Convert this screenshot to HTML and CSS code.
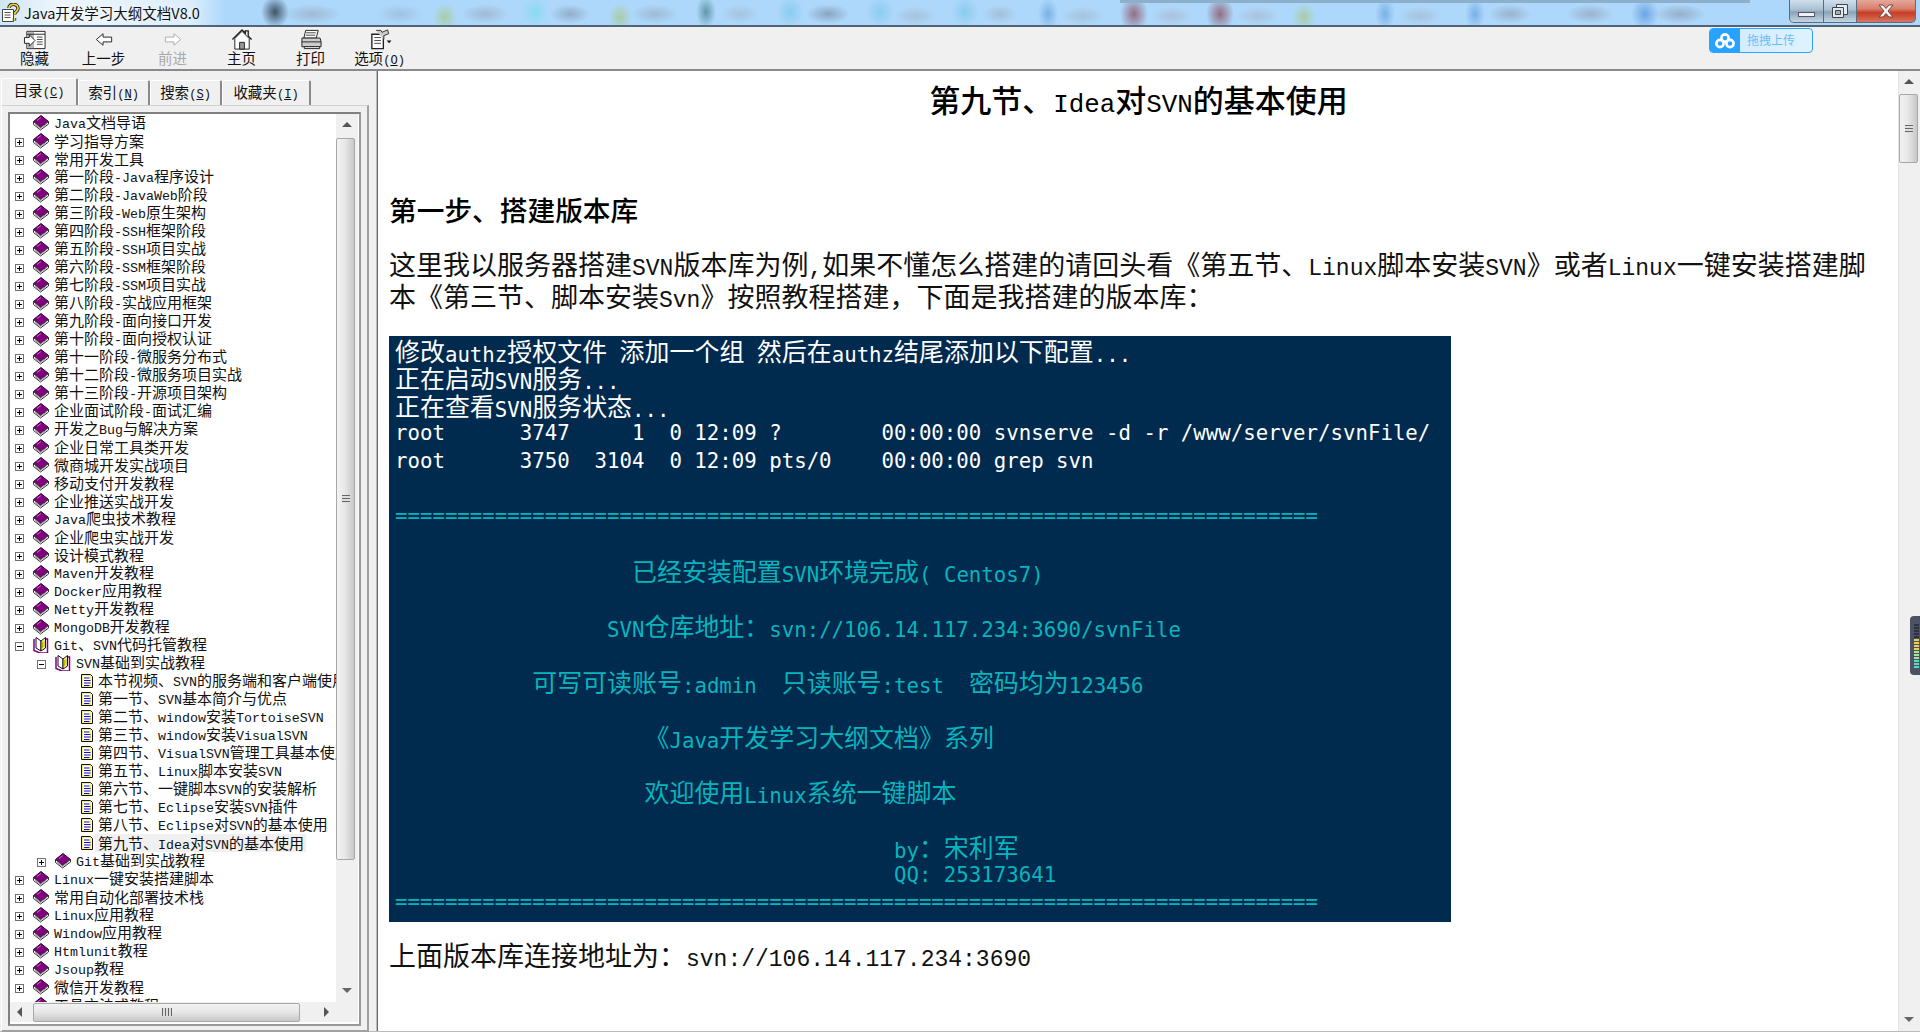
FILE: index.html
```html
<!DOCTYPE html>
<html lang="zh-CN">
<head>
<meta charset="utf-8">
<title>Java开发学习大纲文档V8.0</title>
<link rel="stylesheet" href="styles.css">
</head>
<body>
<svg class="defs" width="0" height="0" aria-hidden="true">
  <symbol id="book" viewBox="0 0 16 16">
    <path d="M.5 6.500 8 .5l7.500 6L7.500 12.500Z" fill="#800080" stroke="#300030"/>
    <path d="M.5 6.500v3l7 5.500 8-6v-2.500l-8 6Z" fill="#fff" stroke="#333"/>
    <path d="M4 5.500 8 2.500" stroke="#c070c0" fill="none"/>
    <path d="M2 9.500l5.500 4 6.500-5" stroke="#999" fill="none"/>
  </symbol>
  <symbol id="open" viewBox="0 0 16 16">
    <path d="M1 2v11.500l6 2.500h7.500V2h-2.500" fill="#fff" stroke="#800080" stroke-width="1.500"/>
    <path d="M3 .5 8 4v10L3 11Z" fill="#fff" stroke="#111"/>
    <path d="M8 4l4.500-3.500V11L8 14Z" fill="#f6f08a" stroke="#111"/>
    <path d="M9.500 5v6M11 4v6" stroke="#c8b400" fill="none"/>
  </symbol>
  <symbol id="page" viewBox="0 0 16 16">
    <path d="M4.500 1.500h9l2 2v11h-11Z" fill="#fff" stroke="#111"/>
    <path d="M5.500 2.500h8v11h-8Z" fill="none" stroke="#e8d800" stroke-dasharray="1 1"/>
    <path d="M7 5h5.500M7 7.500h6.500M7 10h6.500M7 12.500h5.500" stroke="#1010c0" stroke-width="1.200" fill="none"/>
  </symbol>
  <symbol id="plus" viewBox="0 0 9 9">
    <rect x=".5" y=".5" width="8" height="8" fill="#fff" stroke="#707070"/>
    <path d="M2 4.500h5M4.500 2v5" stroke="#000"/>
  </symbol>
  <symbol id="minus" viewBox="0 0 9 9">
    <rect x=".5" y=".5" width="8" height="8" fill="#fff" stroke="#707070"/>
    <path d="M2 4.500h5" stroke="#000"/>
  </symbol>
</svg>

<div class="app">
  <header class="titlebar">
    <svg class="appicon" viewBox="0 0 20 20"><path d="M1.500 6.500h11v12h-11Z" fill="#fff" stroke="#444"/><path d="M3.500 9.500h6M3.500 12h6M3.500 14.500h6" stroke="#555"/><path d="M8 5c0-5 9-5 9 .5 0 3-3.500 3-3.500 6M13.500 15v2.500" fill="none" stroke="#111" stroke-width="3.400"/><path d="M8 5c0-5 9-5 9 .5 0 3-3.500 3-3.500 6M13.500 15v2.500" fill="none" stroke="#ecd23a" stroke-width="1.800"/></svg>
    <span class="apptitle">Java开发学习大纲文档V8.0</span>
    <div class="winctl">
      <button class="wb wmin"><span class="minbar"></span></button>
      <button class="wb wres"><svg width="18" height="16" viewBox="0 0 18 16"><path d="M5.500 1.500h11v10h-11Z" fill="#e4edf4" stroke="#444"/><path d="M1.500 4.500h11v10h-11Z" fill="#dfe8ef" stroke="#444"/><path d="M4.500 7.500h5v4h-5Z" fill="#9db2c4" stroke="#444"/></svg></button>
      <button class="wb wclose"><svg width="18" height="14" viewBox="0 0 18 14"><path d="M2 1h4l3 3.500L12 1h4l-5 6 5 6h-4L9 9.500 6 13H2l5-6Z" fill="#f4f4f4" stroke="#6a4a48"/></svg></button>
    </div>
  </header>

  <nav class="toolbar">
    <div class="tool">
      <svg class="tico" viewBox="0 0 24 24"><path d="M3.500 3.500h19v18h-19Z" fill="#fff" stroke="#222"/><path d="M4 4h7v17H4Z" fill="#b8b8b8"/><path d="M3.500 6.500h19" stroke="#222"/><path d="M14 9.500h6M14 12h6M14 14.500h6M14 17h6" stroke="#444"/><path d="M1 10h5V7l6 6-6 6v-3H1Z" fill="#fff" stroke="#222"/></svg>
      <span>隐藏</span>
    </div>
    <div class="tool">
      <svg class="tico" viewBox="0 0 24 24"><path d="M4 12l7-6v3.500h9v5h-9V18Z" fill="#fff" stroke="#222"/></svg>
      <span>上一步</span>
    </div>
    <div class="tool off">
      <svg class="tico" viewBox="0 0 24 24"><path d="M20 12l-7-6v3.500H4v5h9V18Z" fill="#fff" stroke="#aaa"/></svg>
      <span>前进</span>
    </div>
    <div class="tool">
      <svg class="tico" viewBox="0 0 24 24"><path d="M2 12 12 2l3.500 3.500V3h3v5.500L22 12" fill="none" stroke="#222" stroke-width="1.400"/><path d="M4.500 11v11h15V11L12 3.500Z" fill="#fff" stroke="#222"/><path d="M9.500 22v-7h5v7Z" fill="#999" stroke="#222"/></svg>
      <span>主页</span>
    </div>
    <div class="tool">
      <svg class="tico" viewBox="0 0 24 24"><path d="M6.500 2.500h13l-2 8h-13Z" fill="#fff" stroke="#222"/><path d="M7 5h10M6.500 7.500h10" stroke="#444"/><path d="M2.500 10.500h19l1 4v5h-20v-5Z" fill="#ccc" stroke="#222"/><path d="M2.500 14.500h20" stroke="#222"/><path d="M5 19.500h16v2H5Z" fill="#fff" stroke="#222"/></svg>
      <span>打印</span>
    </div>
    <div class="tool">
      <svg class="tico" viewBox="0 0 24 24"><path d="M3.500 6.500h12v15h-12Z" fill="#fff" stroke="#222" stroke-width="1.400"/><path d="M6 10h7M6 13h7M6 16h7" stroke="#444"/><path d="M8 2.500h5l1 2 6-2.500 1 4-5 2v4" fill="#ccc" stroke="#333"/><path d="M19 13h5l-2.500 3Z" fill="#111"/></svg>
      <span>选项<span class="m">(<u>O</u>)</span></span>
    </div>
    <div class="upload">
      <span class="cloud"><svg width="22" height="18" viewBox="0 0 22 18"><g fill="none" stroke="#fff" stroke-width="2.600"><circle cx="11" cy="6" r="3.600"/><circle cx="6" cy="11.500" r="3.600"/><circle cx="16" cy="11.500" r="3.600"/></g></svg></span>
      <span class="uptext">拖拽上传</span>
    </div>
  </nav>

  <main class="main">
    <aside class="left">
      <div class="tabs">
        <div class="tab active">目录<span class="m">(<u>C</u>)</span></div>
        <div class="tab">索引<span class="m">(<u>N</u>)</span></div>
        <div class="tab">搜索<span class="m">(<u>S</u>)</span></div>
        <div class="tab wide">收藏夹<span class="m">(<u>I</u>)</span></div>
      </div>
      <div class="pane">
        <div class="treebox">
          <ul class="tree">
            <li class="row"><svg class="pm none"></svg><svg class="ic"><use href="#book"/></svg><span class="t"><span class="m">Java</span>文档导语</span></li>
            <li class="row"><svg class="pm"><use href="#plus"/></svg><svg class="ic"><use href="#book"/></svg><span class="t">学习指导方案</span></li>
            <li class="row"><svg class="pm"><use href="#plus"/></svg><svg class="ic"><use href="#book"/></svg><span class="t">常用开发工具</span></li>
            <li class="row"><svg class="pm"><use href="#plus"/></svg><svg class="ic"><use href="#book"/></svg><span class="t">第一阶段<span class="m">-Java</span>程序设计</span></li>
            <li class="row"><svg class="pm"><use href="#plus"/></svg><svg class="ic"><use href="#book"/></svg><span class="t">第二阶段<span class="m">-JavaWeb</span>阶段</span></li>
            <li class="row"><svg class="pm"><use href="#plus"/></svg><svg class="ic"><use href="#book"/></svg><span class="t">第三阶段<span class="m">-Web</span>原生架构</span></li>
            <li class="row"><svg class="pm"><use href="#plus"/></svg><svg class="ic"><use href="#book"/></svg><span class="t">第四阶段<span class="m">-SSH</span>框架阶段</span></li>
            <li class="row"><svg class="pm"><use href="#plus"/></svg><svg class="ic"><use href="#book"/></svg><span class="t">第五阶段<span class="m">-SSH</span>项目实战</span></li>
            <li class="row"><svg class="pm"><use href="#plus"/></svg><svg class="ic"><use href="#book"/></svg><span class="t">第六阶段<span class="m">-SSM</span>框架阶段</span></li>
            <li class="row"><svg class="pm"><use href="#plus"/></svg><svg class="ic"><use href="#book"/></svg><span class="t">第七阶段<span class="m">-SSM</span>项目实战</span></li>
            <li class="row"><svg class="pm"><use href="#plus"/></svg><svg class="ic"><use href="#book"/></svg><span class="t">第八阶段<span class="m">-</span>实战应用框架</span></li>
            <li class="row"><svg class="pm"><use href="#plus"/></svg><svg class="ic"><use href="#book"/></svg><span class="t">第九阶段<span class="m">-</span>面向接口开发</span></li>
            <li class="row"><svg class="pm"><use href="#plus"/></svg><svg class="ic"><use href="#book"/></svg><span class="t">第十阶段<span class="m">-</span>面向授权认证</span></li>
            <li class="row"><svg class="pm"><use href="#plus"/></svg><svg class="ic"><use href="#book"/></svg><span class="t">第十一阶段<span class="m">-</span>微服务分布式</span></li>
            <li class="row"><svg class="pm"><use href="#plus"/></svg><svg class="ic"><use href="#book"/></svg><span class="t">第十二阶段<span class="m">-</span>微服务项目实战</span></li>
            <li class="row"><svg class="pm"><use href="#plus"/></svg><svg class="ic"><use href="#book"/></svg><span class="t">第十三阶段<span class="m">-</span>开源项目架构</span></li>
            <li class="row"><svg class="pm"><use href="#plus"/></svg><svg class="ic"><use href="#book"/></svg><span class="t">企业面试阶段<span class="m">-</span>面试汇编</span></li>
            <li class="row"><svg class="pm"><use href="#plus"/></svg><svg class="ic"><use href="#book"/></svg><span class="t">开发之<span class="m">Bug</span>与解决方案</span></li>
            <li class="row"><svg class="pm"><use href="#plus"/></svg><svg class="ic"><use href="#book"/></svg><span class="t">企业日常工具类开发</span></li>
            <li class="row"><svg class="pm"><use href="#plus"/></svg><svg class="ic"><use href="#book"/></svg><span class="t">微商城开发实战项目</span></li>
            <li class="row"><svg class="pm"><use href="#plus"/></svg><svg class="ic"><use href="#book"/></svg><span class="t">移动支付开发教程</span></li>
            <li class="row"><svg class="pm"><use href="#plus"/></svg><svg class="ic"><use href="#book"/></svg><span class="t">企业推送实战开发</span></li>
            <li class="row"><svg class="pm"><use href="#plus"/></svg><svg class="ic"><use href="#book"/></svg><span class="t"><span class="m">Java</span>爬虫技术教程</span></li>
            <li class="row"><svg class="pm"><use href="#plus"/></svg><svg class="ic"><use href="#book"/></svg><span class="t">企业爬虫实战开发</span></li>
            <li class="row"><svg class="pm"><use href="#plus"/></svg><svg class="ic"><use href="#book"/></svg><span class="t">设计模式教程</span></li>
            <li class="row"><svg class="pm"><use href="#plus"/></svg><svg class="ic"><use href="#book"/></svg><span class="t"><span class="m">Maven</span>开发教程</span></li>
            <li class="row"><svg class="pm"><use href="#plus"/></svg><svg class="ic"><use href="#book"/></svg><span class="t"><span class="m">Docker</span>应用教程</span></li>
            <li class="row"><svg class="pm"><use href="#plus"/></svg><svg class="ic"><use href="#book"/></svg><span class="t"><span class="m">Netty</span>开发教程</span></li>
            <li class="row"><svg class="pm"><use href="#plus"/></svg><svg class="ic"><use href="#book"/></svg><span class="t"><span class="m">MongoDB</span>开发教程</span></li>
            <li class="row"><svg class="pm"><use href="#minus"/></svg><svg class="ic"><use href="#open"/></svg><span class="t"><span class="m">Git</span>、<span class="m">SVN</span>代码托管教程</span></li>
            <li class="row lv2"><svg class="pm"><use href="#minus"/></svg><svg class="ic"><use href="#open"/></svg><span class="t"><span class="m">SVN</span>基础到实战教程</span></li>
            <li class="row lv3"><svg class="pm none"></svg><svg class="ic"><use href="#page"/></svg><span class="t">本节视频、<span class="m">SVN</span>的服务端和客户端使用</span></li>
            <li class="row lv3"><svg class="pm none"></svg><svg class="ic"><use href="#page"/></svg><span class="t">第一节、<span class="m">SVN</span>基本简介与优点</span></li>
            <li class="row lv3"><svg class="pm none"></svg><svg class="ic"><use href="#page"/></svg><span class="t">第二节、<span class="m">window</span>安装<span class="m">TortoiseSVN</span></span></li>
            <li class="row lv3"><svg class="pm none"></svg><svg class="ic"><use href="#page"/></svg><span class="t">第三节、<span class="m">window</span>安装<span class="m">VisualSVN</span></span></li>
            <li class="row lv3"><svg class="pm none"></svg><svg class="ic"><use href="#page"/></svg><span class="t">第四节、<span class="m">VisualSVN</span>管理工具基本使用</span></li>
            <li class="row lv3"><svg class="pm none"></svg><svg class="ic"><use href="#page"/></svg><span class="t">第五节、<span class="m">Linux</span>脚本安装<span class="m">SVN</span></span></li>
            <li class="row lv3"><svg class="pm none"></svg><svg class="ic"><use href="#page"/></svg><span class="t">第六节、一键脚本<span class="m">SVN</span>的安装解析</span></li>
            <li class="row lv3"><svg class="pm none"></svg><svg class="ic"><use href="#page"/></svg><span class="t">第七节、<span class="m">Eclipse</span>安装<span class="m">SVN</span>插件</span></li>
            <li class="row lv3"><svg class="pm none"></svg><svg class="ic"><use href="#page"/></svg><span class="t">第八节、<span class="m">Eclipse</span>对<span class="m">SVN</span>的基本使用</span></li>
            <li class="row lv3"><svg class="pm none"></svg><svg class="ic"><use href="#page"/></svg><span class="t sel">第九节、<span class="m">Idea</span>对<span class="m">SVN</span>的基本使用</span></li>
            <li class="row lv2"><svg class="pm"><use href="#plus"/></svg><svg class="ic"><use href="#book"/></svg><span class="t"><span class="m">Git</span>基础到实战教程</span></li>
            <li class="row"><svg class="pm"><use href="#plus"/></svg><svg class="ic"><use href="#book"/></svg><span class="t"><span class="m">Linux</span>一键安装搭建脚本</span></li>
            <li class="row"><svg class="pm"><use href="#plus"/></svg><svg class="ic"><use href="#book"/></svg><span class="t">常用自动化部署技术栈</span></li>
            <li class="row"><svg class="pm"><use href="#plus"/></svg><svg class="ic"><use href="#book"/></svg><span class="t"><span class="m">Linux</span>应用教程</span></li>
            <li class="row"><svg class="pm"><use href="#plus"/></svg><svg class="ic"><use href="#book"/></svg><span class="t"><span class="m">Window</span>应用教程</span></li>
            <li class="row"><svg class="pm"><use href="#plus"/></svg><svg class="ic"><use href="#book"/></svg><span class="t"><span class="m">Htmlunit</span>教程</span></li>
            <li class="row"><svg class="pm"><use href="#plus"/></svg><svg class="ic"><use href="#book"/></svg><span class="t"><span class="m">Jsoup</span>教程</span></li>
            <li class="row"><svg class="pm"><use href="#plus"/></svg><svg class="ic"><use href="#book"/></svg><span class="t">微信开发教程</span></li>
            <li class="row"><svg class="pm"><use href="#plus"/></svg><svg class="ic"><use href="#book"/></svg><span class="t">工具方法或教程</span></li>
          </ul>
          <div class="vbar small">
            <span class="arrow up"></span>
            <span class="thumb-v"><span class="grip-v"></span></span>
            <span class="arrow down"></span>
          </div>
          <div class="hbar">
            <span class="arrow lf"></span>
            <span class="thumb-h"><span class="grip-h"></span></span>
            <span class="arrow rt"></span>
          </div>
          <div class="corner"></div>
        </div>
      </div>
    </aside>

    <section class="doc">
      <article class="page">
        <h1 class="h1">第九节、<span class="m">Idea</span>对<span class="m">SVN</span>的基本使用</h1>
        <h2 class="h2">第一步、搭建版本库</h2>
        <p class="para">这里我以服务器搭建<span class="m">SVN</span>版本库为例<span class="m">,</span>如果不懂怎么搭建的请回头看《第五节、<span class="m">Linux</span>脚本安装<span class="m">SVN</span>》或者<span class="m">Linux</span>一键安装搭建脚<br>本《第三节、脚本安装<span class="m">Svn</span>》按照教程搭建，下面是我搭建的版本库：</p>
        <div class="console">
          <div class="ln"><span class="cn">修改</span>authz<span class="cn">授权文件</span> <span class="cn">添加一个组</span> <span class="cn">然后在</span>authz<span class="cn">结尾添加以下配置</span>...</div>
          <div class="ln"><span class="cn">正在启动</span>SVN<span class="cn">服务</span>...</div>
          <div class="ln"><span class="cn">正在查看</span>SVN<span class="cn">服务状态</span>...</div>
          <div class="ln">root      3747     1  0 12:09 ?        00:00:00 svnserve -d -r /www/server/svnFile/</div>
          <div class="ln">root      3750  3104  0 12:09 pts/0    00:00:00 grep svn</div>
          <div class="ln"> </div>
          <div class="ln teal">==========================================================================</div>
          <div class="ln"> </div>
          <div class="ln teal">                   <span class="cn">已经安装配置</span>SVN<span class="cn">环境完成</span>( Centos7)</div>
          <div class="ln"> </div>
          <div class="ln teal">                 SVN<span class="cn">仓库地址</span><span class="cn tc">：</span>svn://106.14.117.234:3690/svnFile</div>
          <div class="ln"> </div>
          <div class="ln teal">           <span class="cn">可写可读账号</span>:admin  <span class="cn">只读账号</span>:test  <span class="cn">密码均为</span>123456</div>
          <div class="ln"> </div>
          <div class="ln teal">                    <span class="cn">《</span>Java<span class="cn">开发学习大纲文档》系列</span></div>
          <div class="ln"> </div>
          <div class="ln teal">                    <span class="cn">欢迎使用</span>Linux<span class="cn">系统一键脚本</span></div>
          <div class="ln"> </div>
          <div class="ln teal">                                        by<span class="cn tc">：</span><span class="cn">宋利军</span></div>
          <div class="ln teal">                                        QQ: 253173641</div>
          <div class="ln teal">==========================================================================</div>
        </div>
        <p class="para after">上面版本库连接地址为：<span class="m">svn://106.14.117.234:3690</span></p>
      </article>
      <div class="vbar big">
        <span class="arrow up"></span>
        <span class="thumb-v short"><span class="grip-v"></span></span>
        <span class="track"></span>
        <span class="arrow down"></span>
      </div>
      <div class="speed"><span class="ticks"></span></div>
    </section>
  </main>
</div>
</body>
</html>
```

FILE: styles.css
```css
* { box-sizing: border-box; }
html, body { margin: 0; padding: 0; height: 100%; overflow: hidden; }
body {
  font-family: "Noto Sans CJK SC", "Liberation Sans", sans-serif;
  background: #f0f0f0;
  color: #000;
}
.defs { display: block; height: 0; }
.app { display: flex; flex-direction: column; height: 1032px; width: 1920px; border-bottom: 1px solid #bbb; }
.m { font-family: "Liberation Mono", monospace; font-size: .8333em; line-height: 1; }

/* title bar */
.titlebar {
  height: 27px; flex: none; display: flex; align-items: center; position: relative;
  border-bottom: 2px solid #4f6477;
  background:
    linear-gradient(#8cafcb, #8cafcb) 1120px 0 / 630px 3px no-repeat,
    radial-gradient(ellipse 14px 16px at 275px 12px, #3f5368, transparent),
    radial-gradient(ellipse 30px 10px at 312px 14px, #9fbad4, transparent),
    radial-gradient(ellipse 24px 10px at 400px 14px, #9fc2e0, transparent),
    radial-gradient(ellipse 12px 14px at 445px 17px, #a8cca6, transparent),
    radial-gradient(ellipse 24px 10px at 485px 14px, #9fbad4, transparent),
    radial-gradient(ellipse 14px 16px at 535px 12px, #8adaf2, transparent),
    radial-gradient(ellipse 20px 10px at 570px 14px, #92aeca, transparent),
    radial-gradient(ellipse 12px 14px at 620px 17px, #a8cca6, transparent),
    radial-gradient(ellipse 24px 10px at 655px 14px, #9fbad4, transparent),
    radial-gradient(ellipse 10px 16px at 706px 12px, #6098aa, transparent),
    radial-gradient(ellipse 20px 10px at 740px 14px, #a4c4de, transparent),
    radial-gradient(ellipse 14px 16px at 790px 12px, #8accf0, transparent),
    radial-gradient(ellipse 22px 10px at 828px 14px, #8aa4c0, transparent),
    radial-gradient(ellipse 14px 16px at 880px 12px, #8accf0, transparent),
    radial-gradient(ellipse 22px 10px at 915px 16px, #a6c2dc, transparent),
    radial-gradient(ellipse 14px 16px at 965px 12px, #8accf0, transparent),
    radial-gradient(ellipse 18px 10px at 1000px 14px, #a4c0da, transparent),
    radial-gradient(ellipse 10px 16px at 1048px 14px, #7ab0e6, transparent),
    radial-gradient(ellipse 22px 10px at 1083px 16px, #a6c2dc, transparent),
    radial-gradient(ellipse 14px 18px at 1134px 14px, #926e82, transparent),
    radial-gradient(ellipse 22px 10px at 1172px 16px, #a8c2dc, transparent),
    radial-gradient(ellipse 14px 18px at 1220px 14px, #926e82, transparent),
    radial-gradient(ellipse 22px 10px at 1258px 16px, #a8c2dc, transparent),
    radial-gradient(ellipse 12px 14px at 1304px 17px, #a8cca6, transparent),
    radial-gradient(ellipse 10px 16px at 1385px 14px, #7ab0e6, transparent),
    radial-gradient(ellipse 22px 10px at 1420px 16px, #a6c2dc, transparent),
    radial-gradient(ellipse 10px 16px at 1475px 14px, #7ab0e6, transparent),
    radial-gradient(ellipse 22px 10px at 1510px 14px, #9ab2ce, transparent),
    radial-gradient(ellipse 24px 10px at 1590px 14px, #9ab2ce, transparent),
    radial-gradient(ellipse 14px 16px at 1645px 14px, #6ea4e2, transparent),
    radial-gradient(ellipse 26px 10px at 1680px 14px, #94aecb, transparent),
    linear-gradient(90deg, #d0e6f6 0, #eef6fc 60px, #dceefb 190px, #aed8fb 225px, #aed8fb 100%);
}
.appicon { width: 20px; height: 20px; margin-left: 1px; flex: none; }
.apptitle { margin-left: 3px; font-size: 14.5px; line-height: 24px; color: #111; text-shadow: 0 0 6px #fff; }
.winctl { margin-left: auto; margin-right: 4px; align-self: flex-start; display: flex; height: 23px; }
.wb {
  border: 1px solid #5c6b7a; border-top: 0; border-left-width: 1px; padding: 0; display: flex;
  align-items: center; justify-content: center;
}
.wmin { width: 35px; border-radius: 0 0 0 5px;
  background: linear-gradient(#cfe0ee 0, #a8bfd2 45%, #8ba2b7 55%, #c5d6e4 100%); }
.wres { width: 33px; border-left: 0;
  background: linear-gradient(#cfe0ee 0, #a8bfd2 45%, #8ba2b7 55%, #c5d6e4 100%); }
.wclose { width: 59px; border-left: 0; border-radius: 0 0 5px 0;
  background: linear-gradient(#e5a89c 0, #d87e6c 40%, #c63c24 58%, #d97460 100%); }
.minbar { display: block; width: 17px; height: 5px; margin-top: 7px; background: #eef2f6; border: 1px solid #556; }

/* toolbar */
.toolbar {
  height: 44px; flex: none; display: flex; background: #f0f0f0; border-bottom: 2px solid #8a8a8a; padding-top: 1px;
}
.tool { width: 69px; display: flex; flex-direction: column; align-items: center; font-size: 14.500px; line-height: 18px; color: #111; }
.tool .tico { width: 24px; height: 23px; flex: none; }
.tool > span { white-space: nowrap; margin-top: -2px; }
.tool.off { color: #a8a8a8; }
.upload {
  margin-left: auto; margin-right: 107px; width: 104px; height: 25px; margin-top: 0;
  display: flex; border: 1px solid #2aa4ff; border-radius: 4px; overflow: hidden;
  background: linear-gradient(90deg, #cfeaff, #dff2ff);
}
.cloud { width: 30px; flex: none; background: #27a2ff; display: flex; align-items: center; justify-content: center; }
.uptext { margin-left: 7px; font-size: 12px; line-height: 22px; color: #6cbcf6; }

/* main */
.main { flex: 1; display: flex; min-height: 0; }
.left { width: 377px; flex: none; background: #f0f0f0; padding-top: 7px; display: flex; flex-direction: column; border-right: 1px solid #bbb; }
.tabs { display: flex; height: 27px; padding-left: 1px; align-items: flex-end; flex: none; }
.tab {
  width: 72px; height: 25px; font-size: 14.500px; line-height: 22px; text-align: center; color: #111;
  background: #f0f0f0; border: 1px solid #fff; border-bottom: 0; border-right: 2px solid #8a8a8a; border-radius: 2px 2px 0 0;
}
.tab.active { width: 77px; height: 27px; line-height: 21px; }
.tab.wide { width: 89px; }
.pane { flex: 1; width: 368px; margin-bottom: 6px; margin-left: 1px; border: 1px solid #fff; border-top-color: #d0d0d0; border-right: 2px solid #a0a0a0; border-bottom: 2px solid #a0a0a0; padding: 6px 6px 4px 6px; display: flex; }
.treebox {
  flex: 1; display: grid; grid-template-columns: 326px 22px; grid-template-rows: 888px 20px;
  border: 2px solid #808080; border-right-color: #999; border-bottom-color: #999; background: #fff; height: 914px;
}
.tree { list-style: none; margin: 0; padding: 0; overflow: hidden; white-space: nowrap; font-size: 15px; }
.tree .m { font-size: 13.300px; }
.row { height: 18px; display: flex; align-items: center; padding-left: 5px; color: #111; }
.row.lv2 { padding-left: 27px; }
.row.lv3 { padding-left: 49px; }
.pm { width: 9px; height: 9px; margin-right: 9px; flex: none; margin-top: 2px; }
.ic { width: 16px; height: 16px; margin-right: 5px; flex: none; }
.t { line-height: 18px; flex: none; margin-top: -1px; }
.sel { background: #f0f0f0; padding-right: 2px; margin-left: -3px; padding-left: 3px; margin-top: 0; }

/* scrollbars */
.vbar { background: #f0f0f0; display: flex; flex-direction: column; align-items: stretch; }
.small { grid-column: 2; grid-row: 1; }
.big { width: 22px; padding-right: 2px; flex: none; border-left: 1px solid #e4e4e4; background: #f0f0f0; }
.arrow { display: block; flex: none; height: 22px; position: relative; }
.arrow.up { height: 24px; }
.arrow::after { content: ""; position: absolute; width: 0; height: 0; border-style: solid; }
.arrow.up::after { left: 50%; margin-left: -5px; top: 8px; border-width: 0 5px 5px; border-color: transparent transparent #555; }
.arrow.down { margin-top: auto; }
.arrow.down::after { left: 50%; margin-left: -5px; top: 8px; border-width: 5px 5px 0; border-color: #666 transparent transparent; }
.arrow.lf, .arrow.rt { width: 20px; height: 20px; }
.arrow.lf::after { left: 7px; top: 5px; border-width: 5px 5px 5px 0; border-color: transparent #555 transparent transparent; }
.arrow.rt::after { right: 7px; top: 5px; border-width: 5px 0 5px 5px; border-color: transparent transparent transparent #555; }
.thumb-v {
  display: flex; align-items: center; justify-content: center; height: 722px; flex: none; width: 19px;
  border: 1px solid #a8a8a8; border-radius: 2px;
  background: linear-gradient(90deg, #f2f2f2, #e8e8e8 45%, #c8c8c8);
}
.thumb-v.short { height: 69px; margin-top: -1px; }
.grip-v { width: 8px; height: 8px; background: repeating-linear-gradient(#666 0 1px, #ddd 1px 3px); }
.track { flex: 1; }
.hbar { grid-column: 1; grid-row: 2; display: flex; align-items: center; background: #f0f0f0; }
.thumb-h {
  display: flex; align-items: center; justify-content: center; height: 19px; width: 267px; flex: none;
  margin-left: 3px;
  border: 1px solid #a8a8a8; border-radius: 2px; background: linear-gradient(#f2f2f2, #e8e8e8 45%, #c8c8c8);
}
.grip-h { width: 10px; height: 8px; background: repeating-linear-gradient(90deg, #666 0 1px, #ddd 1px 3px); }
.arrow.rt { margin-left: auto; }
.corner { grid-column: 2; grid-row: 2; background: #f0f0f0; }

/* document */
.doc { flex: 1; display: flex; position: relative; min-width: 0; background: #fff; border-left: 1px solid #696969; }
.page { flex: 1; min-width: 0; padding: 7.500px 0 0 11px; overflow: hidden; background: #fff; }
.h1 { margin: 0; font-size: 31px; line-height: 40px; font-weight: 500; text-align: center; padding-right: 10px; }
.h2 { margin: 74px 0 0; font-size: 27.700px; line-height: 32px; font-weight: 500; }
.para { margin: 24px 0 0; font-size: 27px; line-height: 30.600px; white-space: nowrap; color: #111; }
.para .m { font-size: 23px; }
.para.after { margin-top: 18px; }
.console {
  margin-top: 23px; width: 1062px; height: 586px; padding: 2px 0 0 6px;
  background: #012a4f; color: #fff;
  font-family: "DejaVu Sans Mono", "Liberation Mono", monospace; font-size: 20.730px;
}
.ln { height: 27.600px; line-height: 27.600px; white-space: pre; overflow: hidden; }
.teal { color: #08b4bc; }
.cn { font-family: "Noto Sans CJK SC", sans-serif; font-size: 24.960px; line-height: 1; vertical-align: 1px; }
.tc { font-family: "Noto Sans CJK TC", sans-serif; }

.speed { position: absolute; right: 0; top: 545px; width: 10px; height: 59px; background: #4c5263; border-radius: 4px 0 0 4px; padding: 7px 0 0 4px; }
.ticks {
  display: block; width: 5px; height: 46px;
  background:
    repeating-linear-gradient(#4c5263 0 1px, transparent 1px 3px),
    linear-gradient(#2d3240 0 15px, #e8d060 15px 28px, #a8e0a0 28px 36px, #60d8c0 36px);
}
```
